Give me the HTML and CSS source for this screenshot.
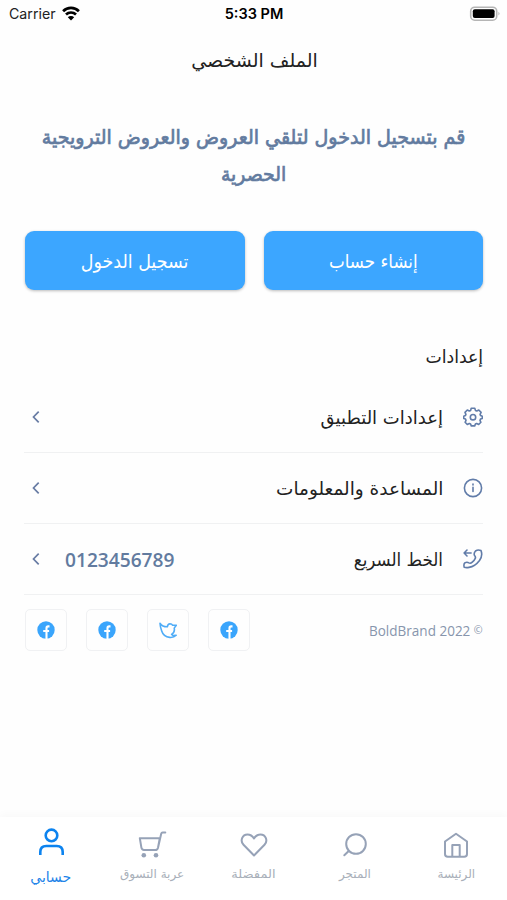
FILE: index.html
```
<!DOCTYPE html>
<html lang="ar" dir="rtl">
<head>
<meta charset="utf-8">
<title>الملف الشخصي</title>
<link rel="stylesheet" href="styles.css">
</head>
<body>
<div class="status" dir="ltr">
  <div class="carrier"><span>Carrier</span>
    <svg width="20" height="15" viewBox="0 0 20 15"><path d="M2.1 5.2a11.2 11.2 0 0 1 15.8 0M5 8.5a7.2 7.2 0 0 1 10 0" fill="none" stroke="#000" stroke-width="2.7"/><path d="M10 14.4 6.8 11.2a4.6 4.6 0 0 1 6.4 0Z"/></svg>
  </div>
  <div class="time">5:33 PM</div>
  <div class="battery"><svg width="32" height="16" viewBox="0 0 32 16"><rect x="1.7" y="1.2" width="26" height="13" rx="4" fill="#fff" stroke="#b5b5b5" stroke-width="1.6"/><rect x="3.8" y="3.300" width="21.800" height="8.800" rx="2"/><path d="M29.500 5.800q2 1.900 0 3.800z" fill="#aaa"/></svg></div>
</div>
<h1 class="title"><span class="t-title">الملف الشخصي</span></h1>
<p class="intro"><span class="t-intro">قم بتسجيل الدخول لتلقي العروض والعروض الترويجية</span><span class="t-intro2">الحصرية</span></p>
<div class="buttons">
  <button><span class="t-create">إنشاء حساب</span></button>
  <button><span class="t-login">تسجيل الدخول</span></button>
</div>
<h2 class="section"><span class="t-section">إعدادات</span></h2>
<ul class="list">
  <li>
    <svg class="icon" viewBox="0 0 20 20"><path d="M8.2 1.3h3.600l.6 2.100 1.400.6 2-1 2.300 2.400-1 2 .5 1.200 1.700.7v2.100l-1.800.7-.5 1.300.9 1.900-2.200 2.200-2-.9-1.300.5-.7 1.800H8.300l-.7-1.800-1.300-.5-2 .9-2.200-2.200.9-1.900-.5-1.300-1.800-.7V9.300l1.700-.7.5-1.200-.9-2L4.300 3l2 1 1.400-.6z"/><circle cx="10" cy="10.200" r="2.700"/></svg>
    <span class="label"><span class="t-app">إعدادات التطبيق</span></span>
    <svg class="chev" viewBox="0 0 8 14"><path d="M6.700 1.700 1.500 7l5.200 5.300"/></svg>
  </li>
  <li>
    <svg class="icon" viewBox="0 0 20 20"><circle cx="10" cy="10" r="8.600"/><path d="M10 9.200v4.300M10 6v.9"/></svg>
    <span class="label"><span class="t-help">المساعدة والمعلومات</span></span>
    <svg class="chev" viewBox="0 0 8 14"><path d="M6.700 1.700 1.500 7l5.200 5.300"/></svg>
  </li>
  <li>
    <svg class="icon" viewBox="0 0 20 20"><path d="M12.500 2Q15 .3 18 1.600q2 4.900-1.500 9.900-4.500 6-10.500 6.900-2.800.5-4.800-.1-.8-2.900.6-4.400 2.200-1.300 4.100 0 1.600.9 3.400-.7 2.200-2 3.100-4.100.4-1.400-.8-2.500-1.200-2.300.9-4.600zM4 1 1.100 4 4 7M1.100 4h7"/></svg>
    <span class="label"><span class="t-line">الخط السريع</span></span>
    <span class="phone">0123456789</span>
    <svg class="chev" viewBox="0 0 8 14"><path d="M6.700 1.700 1.500 7l5.200 5.300"/></svg>
  </li>
</ul>
<div class="footer">
  <div class="copy" dir="ltr">BoldBrand 2022 <sup>©</sup></div>
  <div class="social" dir="ltr">
    <a><svg viewBox="0 0 18 18"><circle cx="9" cy="9" r="8.700" fill="#3aa5fc"/><path d="M12.500 5.400h-1.300q-1.700 0-1.700 1.700V18M6.200 10h5.900" fill="none" stroke="#fff" stroke-width="2.100"/></svg></a>
    <a><svg viewBox="0 0 18 18"><circle cx="9" cy="9" r="8.700" fill="#3aa5fc"/><path d="M12.500 5.400h-1.300q-1.700 0-1.700 1.700V18M6.200 10h5.900" fill="none" stroke="#fff" stroke-width="2.100"/></svg></a>
    <a><svg viewBox="0 0 18 18"><path d="M1 2.200q2.500 3.700 7.300 3.600Q8.700 3 11 2.800q1.800 0 2.700 1.500l3.600-.1-2.100 2.900q1 4-2.600 6.300l1.300 1.100 3.300-.2q-2.500 2.500-6.500 2.100-6.200-.6-8-6.400Q1.300 6.500 1 2.200z" fill="none" stroke="#4facf7" stroke-width="1.600" stroke-linejoin="round"/></svg></a>
    <a><svg viewBox="0 0 18 18"><circle cx="9" cy="9" r="8.700" fill="#3aa5fc"/><path d="M12.500 5.400h-1.300q-1.700 0-1.700 1.700V18M6.200 10h5.900" fill="none" stroke="#fff" stroke-width="2.100"/></svg></a>
  </div>
</div>
<nav class="tabs">
  <a><svg viewBox="0 0 30 30"><path d="M4 11.500 15 3.800l11 7.700V24q0 2.800-2.800 2.800H6.800Q4 26.800 4 24zM11.300 26.800V14.900h7.400v11.900"/></svg><span class="t-home">الرئيسة</span></a>
  <a><svg viewBox="0 0 30 30"><circle cx="16" cy="14" r="9.800"/><path d="m8.700 21-4.400 4.300"/></svg><span class="t-shop">المتجر</span></a>
  <a><svg viewBox="0 0 30 30"><path d="M15 25.500 4.500 14.800C.8 11 3.200 4.500 8.500 4.500c3.100 0 5 1.600 6.500 4 1.500-2.400 3.400-4 6.500-4 5.300 0 7.700 6.500 4 10.300z"/></svg><span class="t-fav">المفضلة</span></a>
  <a><svg viewBox="0 0 30 30"><path d="M2.800 8.200h20L21 17.700q-.5 2.300-2.800 2.300H7Q4.800 20 4.400 17.700zM28.300 2.500h-2.700q-1.100 0-1.400 1.200L21 17.700"/><circle class="dot" cx="6.800" cy="25.200" r="2.300"/><circle class="dot" cx="19" cy="25.200" r="2.300"/></svg><span class="t-cart">عربة التسوق</span></a>
  <a class="active"><svg viewBox="0 0 30 30"><circle cx="15.500" cy="8.400" r="5.800"/><path d="M4.300 28v-3q0-6 6-6h10.400q6 0 6 6v3"/></svg><span class="t-me">حسابي</span></a>
</nav>
</body>
</html>
```
FILE: styles.css
```
* { box-sizing: border-box; }
body { margin: 0; width: 507px; height: 900px; display: flex; flex-direction: column; overflow: hidden; background: #fefefe; color: #222; font-family: "DejaVu Sans", sans-serif; }
h1, h2, p, ul { margin: 0; padding: 0; font-weight: 400; }
span { display: inline-block; white-space: nowrap; }
svg { flex: none; }
.status { height: 28px; padding: 0 6px 0 9px; display: grid; grid-template-columns: 1fr auto 1fr; align-items: center; font: 14.200px/28px Inter, sans-serif; }
.carrier { display: flex; align-items: center; gap: 5px; }
.carrier svg { margin-top: -2px; }
.time { font-weight: 600; font-size: 14.500px; color: #000; position: relative; left: -1px; }
.battery { display: flex; justify-content: flex-end; }
.title { height: 66px; line-height: 64px; text-align: center; font-size: 19px; }
.t-title { transform: translateX(1px); }
.intro { height: 137px; padding-top: 25px; display: flex; flex-direction: column; align-items: center; font-size: 20px; line-height: 37px; color: #627b9f; -webkit-text-stroke: .7px #627b9f; }
.t-intro { transform: scaleX(.952); }
.t-intro2 { transform: scaleX(.944); }
.buttons { display: flex; gap: 19px; padding: 0 24px 0 25px; height: 59px; }
button { flex: 1; border: 0; border-radius: 9px; background: #3ca6ff; color: #fff; font: 19px "DejaVu Sans", sans-serif; box-shadow: 0 1px 3px #0004; }
.t-create { transform: scaleX(.88); }
.t-login { transform: scaleX(.92); }
.section { height: 92px; padding: 47px 24px 0; font-size: 18px; line-height: 40px; }
.t-section { transform: scaleX(.96); transform-origin: right; }
.list { list-style: none; padding: 0 24px; }
.list li { height: 71px; display: flex; align-items: center; border-bottom: 1px solid #f0f1f2; }
.icon { width: 20px; height: 20px; margin-left: 20px; fill: none; stroke: #617ca9; stroke-width: 1.600; stroke-linejoin: round; stroke-linecap: round; }
.label { flex: 1; font-size: 18px; padding-top: 1px; }
.label span { transform-origin: right; }
.t-help { transform: scaleX(1.024); }
.t-line { transform: scaleX(.93); }
.phone { font: 600 20px "Open Sans", sans-serif; color: #627b9f; margin-left: 25px; transform: scaleX(.957); transform-origin: left; }
.chev { width: 8px; height: 14px; margin-left: 8px; fill: none; stroke: #687ca4; stroke-width: 1.700; }
.footer { display: flex; justify-content: space-between; padding: 14px 24px 0 25px; }
.copy { font: 14px/43px "Open Sans", sans-serif; color: #8795ac; white-space: nowrap; transform: scaleX(.966); transform-origin: right; }
.copy sup { font-size: 11px; line-height: 0; vertical-align: 2px; }
.social { display: flex; gap: 19px; }
.social a { width: 42px; height: 42px; border: 1px solid #f0f1f3; border-radius: 5px; display: grid; place-items: center; }
.social svg { width: 18px; height: 18px; }
.tabs { margin-top: auto; height: 83px; display: grid; grid-template-columns: repeat(5, 101.400px); background: #fff; box-shadow: 0 -3px 8px #00000006; font-size: 12px; color: #a8afb9; }
.tabs a { display: flex; flex-direction: column; align-items: center; padding-top: 13px; }
.tabs svg { width: 30px; height: 30px; fill: none; stroke: #96a2b7; stroke-width: 2; stroke-linejoin: round; stroke-linecap: round; }
.tabs .dot { fill: #96a2b7; stroke: none; }
.tabs span { line-height: 28px; }
.t-fav { transform: scaleX(1.090); }
.tabs .active { color: #2183e8; font-size: 14px; padding-top: 10px; }
.tabs .active svg { stroke: #0c83ef; stroke-width: 2.600; stroke-linecap: butt; }
.tabs .active span { line-height: 40px; }
```
